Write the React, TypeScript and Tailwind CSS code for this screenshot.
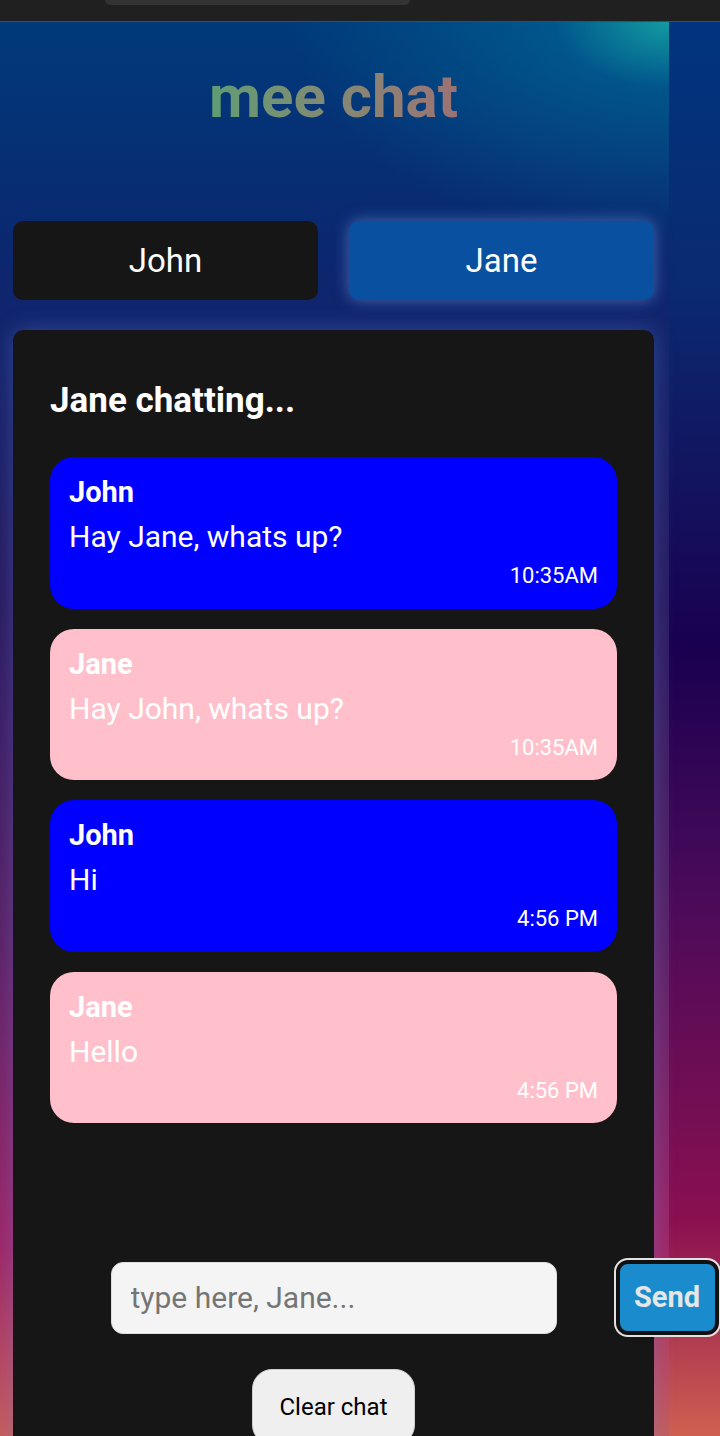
import React from "react";

type Msg = { name: string; text: string; time: string; me: boolean };

const messages: Msg[] = [
  { name: "John", text: "Hay Jane, whats up?", time: "10:35AM", me: false },
  { name: "Jane", text: "Hay John, whats up?", time: "10:35AM", me: true },
  { name: "John", text: "Hi", time: "4:56 PM", me: false },
  { name: "Jane", text: "Hello", time: "4:56 PM", me: true },
];

function Bubble({ m }: { m: Msg }) {
  return (
    <div
      className={
        "w-full rounded-[24px] px-[19px] pt-[18px] pb-[19.5px] text-white " +
        (m.me ? "bg-[#ffc0cb]" : "bg-[#0000ff]")
      }
    >
      <div className="text-[29px] leading-[34px] font-bold">{m.name}</div>
      <div className="mt-[10px] text-[30px] leading-[35px]">{m.text}</div>
      <div className="mt-[9px] text-right text-[22px] leading-[26px]">{m.time}</div>
    </div>
  );
}

export default function App() {
  return (
    <div
      className="w-[720px] h-[1436px] overflow-hidden flex flex-col bg-[linear-gradient(180deg,#003580_0%,#0a2a70_20%,#1a0050_45%,#4a0a5a_62%,#8a1050_85%,#d06050_100%)]"
      style={{ fontFamily: "Roboto, 'Noto Sans', sans-serif" }}
    >
      <div className="h-[22px] shrink-0 bg-[#202020] border-b border-[#4a4a4a]">
        <div className="ml-[105px] w-[305px] h-[5px] rounded-b-full bg-[#333333]" />
      </div>
      <div className="flex flex-1">
        <div className="w-[669px] shrink-0 pl-[13px] pr-[15px] bg-[radial-gradient(ellipse_380px_220px_at_100%_0%,rgba(20,165,165,0.9)_0%,rgba(0,110,155,0.55)_30%,rgba(0,70,140,0)_100%),linear-gradient(180deg,#003a7a_0%,#0a2870_15%,#2a1a60_40%,#5a2065_62%,#a02565_84%,#d06a55_100%)]">
          <div className="mt-[45px] flex justify-center">
            <h1 className="text-[60px] leading-[60px] font-bold bg-gradient-to-r from-[#5e9c74] to-[#9c7274] bg-clip-text text-transparent">
              mee chat
            </h1>
          </div>
          <div className="mt-[94px] flex gap-[31px]">
            <button className="flex-1 h-[79px] rounded-[10px] bg-[#161616] text-white text-[33px]">
              John
            </button>
            <button className="flex-1 h-[79px] rounded-[10px] bg-[#0950a0] text-white text-[33px] shadow-[0_0_16px_rgba(130,170,240,0.5)]">
              Jane
            </button>
          </div>
          <div className="mt-[30px] rounded-[10px] bg-[#161616] px-[37px] pt-[50px] pb-[40px] shadow-[0_0_22px_rgba(110,140,230,0.35)]">
            <h2 className="text-[35px] leading-[41px] font-bold text-white">Jane chatting...</h2>
            <div className="mt-[36px] flex flex-col gap-[20px]">
              {messages.map((m, i) => (
                <Bubble key={i} m={m} />
              ))}
            </div>
            <div className="mt-[137px] grid grid-cols-[minmax(0,1fr)_446px_minmax(0,1fr)] items-center">
              <div />
              <input
                className="h-[72px] w-full rounded-[12px] bg-[#f4f4f4] border border-[#dddddd] px-[19px] text-[30px] text-black placeholder:text-[#757575] outline-none"
                placeholder="type here, Jane..."
              />
              <div className="justify-self-start">
                <button className="ml-[59px] w-[103px] h-[75px] rounded-[12px] bg-[#1a8ccd] border-[4px] border-[#111111] outline-2 outline-[#e2e2e2] text-[#e6e6e6] text-[29px] font-bold">
                  Send
                </button>
              </div>
            </div>
            <div className="mt-[34px] flex justify-center">
              <button className="h-[76px] px-[26px] rounded-[20px] bg-[#efefef] border border-[#cfcfcf] text-black text-[24px]">
                Clear chat
              </button>
            </div>
          </div>
        </div>
      </div>
    </div>
  );
}
